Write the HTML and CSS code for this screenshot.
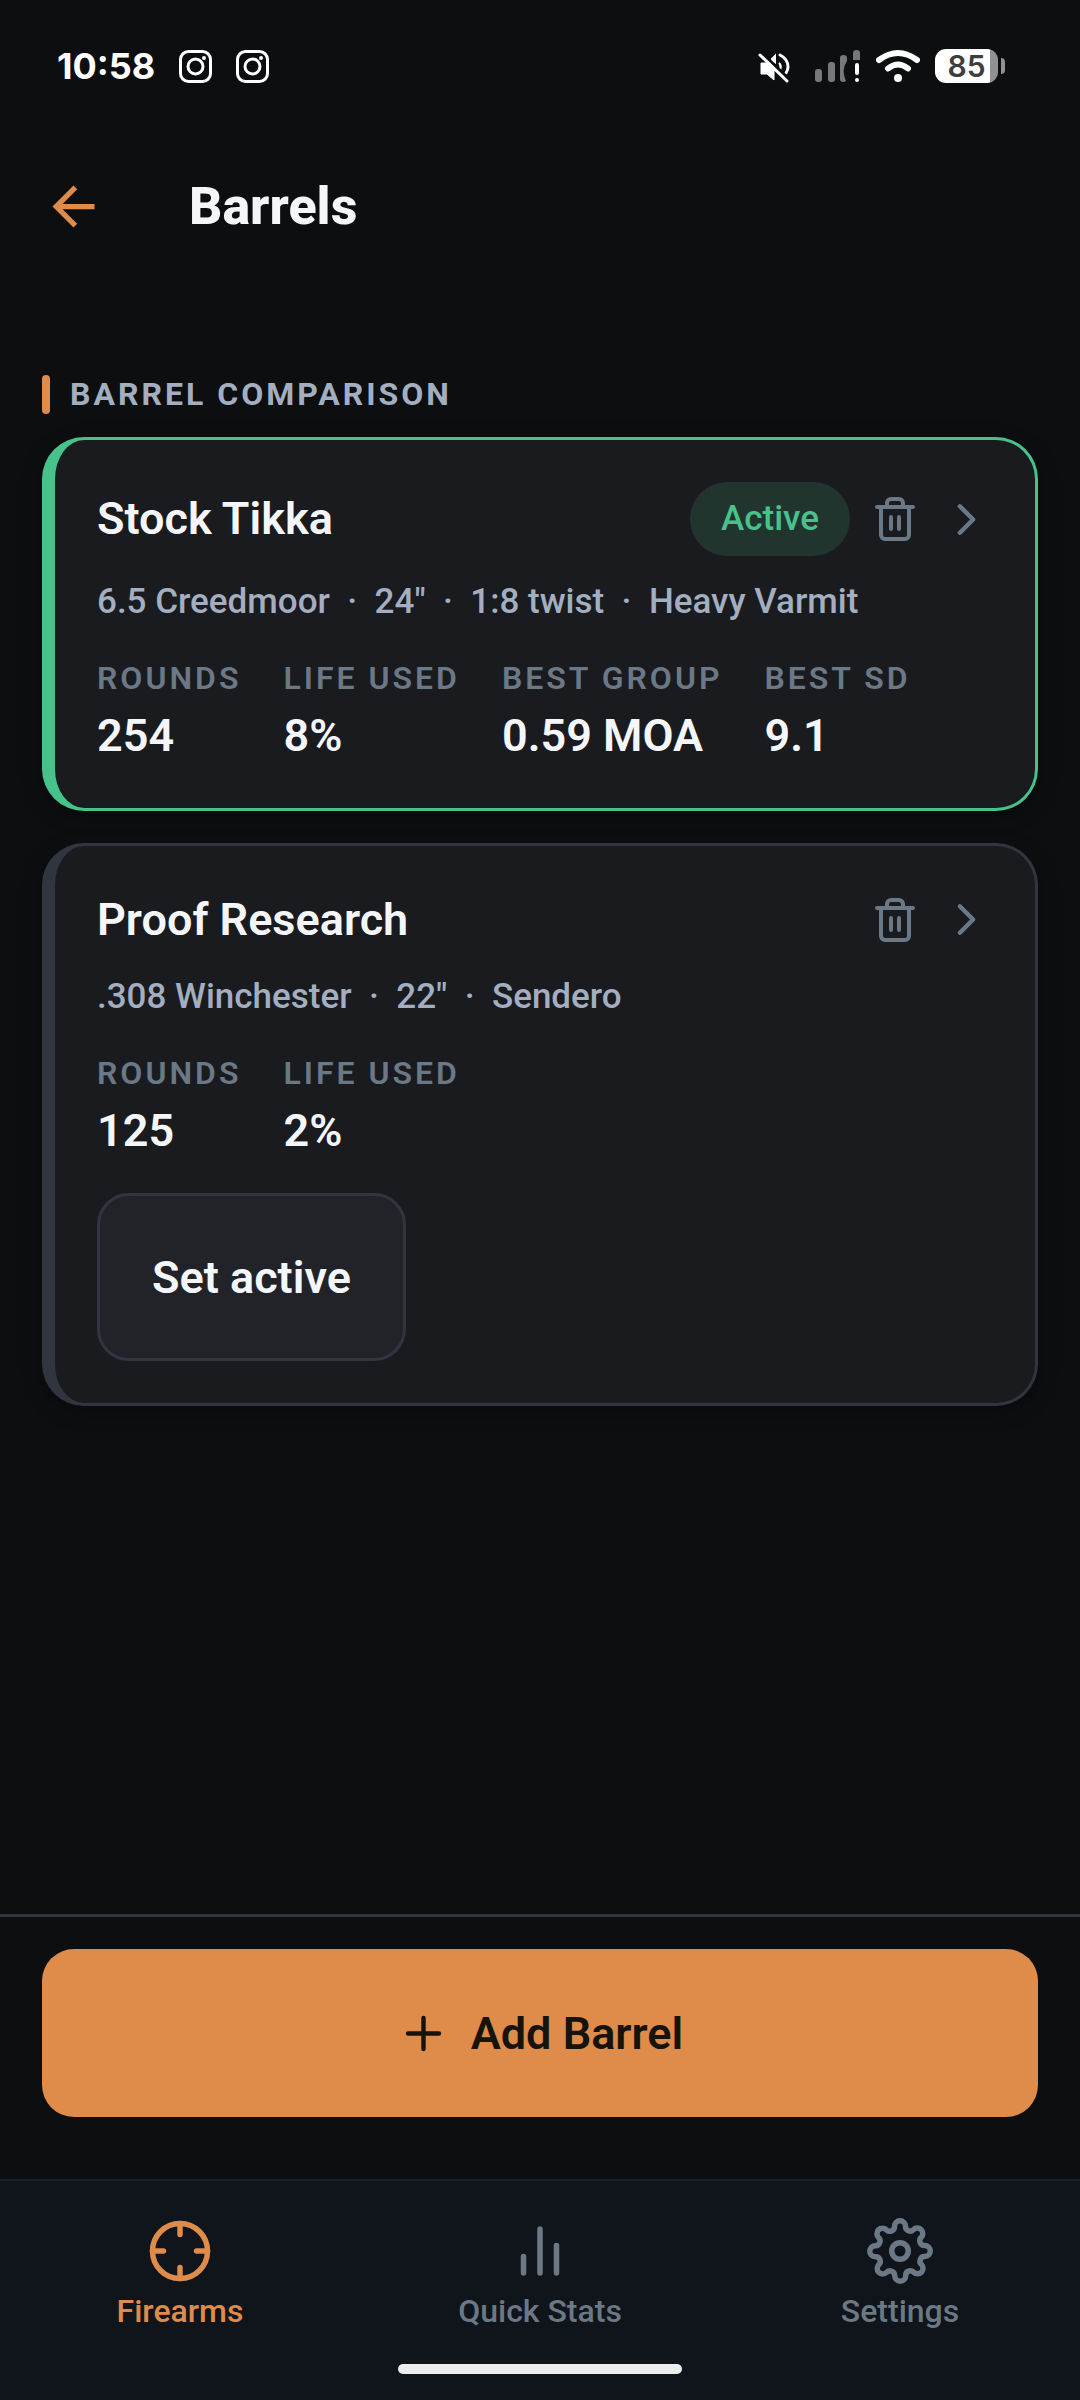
FILE: index.html
```html
<!DOCTYPE html>
<html lang="en">
<head>
  <meta charset="UTF-8">
  <meta name="viewport" content="width=device-width, initial-scale=1.0">
  <title>Barrels</title>
  <link rel="stylesheet" href="styles.css">
</head>
<body>
  <!-- shared icons -->
  <svg class="sprite" aria-hidden="true">
    <symbol id="icon-camera" viewBox="0 0 33 33">
      <rect x="1.5" y="1.5" width="30" height="30" rx="8" fill="none" stroke="currentColor" stroke-width="3"/>
      <circle cx="16.5" cy="16.5" r="7.5" fill="none" stroke="currentColor" stroke-width="3"/>
      <circle cx="25" cy="8" r="2" fill="currentColor"/>
    </symbol>
    <symbol id="icon-trash" viewBox="0 0 24 24">
      <path d="M3 6h18"/>
      <path d="M19 6v14a2 2 0 0 1-2 2H7a2 2 0 0 1-2-2V6m3 0V4a2 2 0 0 1 2-2h4a2 2 0 0 1 2 2v2"/>
      <path d="M10 11v6M14 11v6"/>
    </symbol>
    <symbol id="icon-chevron" viewBox="0 0 24 24">
      <path d="M9 18l6-6-6-6"/>
    </symbol>
  </svg>

  <div class="status-bar">
    <div class="status-left">
      <span class="clock">10:58</span>
      <svg class="notification"><use href="#icon-camera"/></svg>
      <svg class="notification"><use href="#icon-camera"/></svg>
    </div>
    <div class="status-right">
      <svg class="mute" viewBox="0 0 34 34">
        <path d="M3 14h6l7-5v22l-7-6H3z" fill="#fff" stroke="#fff" stroke-linejoin="round"/>
        <path d="M14 10l3-3v6zM21 14q3 3 1 7" fill="#fff" stroke="#fff" stroke-width="2"/>
        <path d="M22 6q8 4 8 12q0 3-2 6" fill="none" stroke="#fff" stroke-width="3" stroke-linecap="round"/>
        <path d="M4 4l28 27" stroke="#0c0e10" stroke-width="3"/>
        <path d="M2 6l27 26" stroke="#fff" stroke-width="3" stroke-linecap="round"/>
      </svg>
      <svg class="signal" viewBox="0 0 46 34">
        <rect x="0" y="20" width="7" height="13" rx="3" fill="#777879"/>
        <rect x="13" y="13" width="7" height="20" rx="3" fill="#777879"/>
        <path d="M25 9q0-3 3.500-3t3.500 3v3q-6 9-1 20q-1 1-3 1q-3 0-3-3z" fill="#777879"/>
        <path d="M38 11V4q0-3 3.500-3t3.500 3v7z" fill="#777879"/>
        <rect x="40" y="14" width="4" height="12" rx="2" fill="#fff"/>
        <circle cx="42" cy="31" r="2" fill="#fff"/>
      </svg>
      <svg class="wifi" viewBox="0 0 44 34">
        <path d="M3 11q19-14 38 0" fill="none" stroke="#fff" stroke-width="6" stroke-linecap="round"/>
        <path d="M12 19.500q10-8 20 0" fill="none" stroke="#fff" stroke-width="6" stroke-linecap="round"/>
        <circle cx="22" cy="29" r="4" fill="#fff"/>
      </svg>
      <div class="battery">
        <span class="battery-level">85</span>
        <span class="battery-tip"></span>
      </div>
    </div>
  </div>

  <header class="app-header">
    <a class="back" href="#" aria-label="Back">
      <svg viewBox="0 0 24 24"><path d="M20 11H7.830l5.590-5.590L12 4l-8 8 8 8 1.410-1.410L7.830 13H20z"/></svg>
    </a>
    <h1>Barrels</h1>
  </header>

  <main class="content">
    <h2 class="section-title">BARREL COMPARISON</h2>

    <article class="card card-active">
      <div class="card-head">
        <h3>Stock Tikka</h3>
        <span class="badge">Active</span>
        <button class="icon-button" type="button" aria-label="Delete Stock Tikka">
          <svg class="icon icon-trash"><use href="#icon-trash"/></svg>
        </button>
        <a class="icon-button" href="#" aria-label="Open Stock Tikka">
          <svg class="icon icon-chevron"><use href="#icon-chevron"/></svg>
        </a>
      </div>
      <p class="specs">6.5 Creedmoor &nbsp;·&nbsp; 24" &nbsp;·&nbsp; 1:8 twist &nbsp;·&nbsp; Heavy Varmit</p>
      <dl class="stats">
        <div><dt>ROUNDS</dt><dd>254</dd></div>
        <div><dt>LIFE USED</dt><dd>8%</dd></div>
        <div><dt>BEST GROUP</dt><dd>0.59 MOA</dd></div>
        <div><dt>BEST SD</dt><dd>9.1</dd></div>
      </dl>
    </article>

    <article class="card">
      <div class="card-head">
        <h3>Proof Research</h3>
        <button class="icon-button" type="button" aria-label="Delete Proof Research">
          <svg class="icon icon-trash"><use href="#icon-trash"/></svg>
        </button>
        <a class="icon-button" href="#" aria-label="Open Proof Research">
          <svg class="icon icon-chevron"><use href="#icon-chevron"/></svg>
        </a>
      </div>
      <p class="specs">.308 Winchester &nbsp;·&nbsp; 22" &nbsp;·&nbsp; Sendero</p>
      <dl class="stats">
        <div><dt>ROUNDS</dt><dd>125</dd></div>
        <div><dt>LIFE USED</dt><dd>2%</dd></div>
      </dl>
      <button class="button button-secondary" type="button">Set active</button>
    </article>
  </main>

  <div class="actions">
    <button class="button button-primary" type="button">
      <svg class="icon icon-plus" viewBox="0 0 24 24"><path d="M12 5v14M5 12h14"/></svg>
      Add Barrel
    </button>
  </div>

  <footer class="tab-bar">
    <nav class="tabs">
      <a class="tab tab-current" href="#">
        <svg class="icon" viewBox="0 0 24 24">
          <circle cx="12" cy="12" r="10"/>
          <path d="M22 12h-4M6 12H2M12 6V2M12 22v-4"/>
        </svg>
        Firearms
      </a>
      <a class="tab" href="#">
        <svg class="icon" viewBox="0 0 24 24"><path d="M18 20V10M12 20V4M6 20v-6"/></svg>
        Quick Stats
      </a>
      <a class="tab" href="#">
        <svg class="icon" viewBox="0 0 24 24">
          <circle cx="12" cy="12" r="3"/>
          <path d="M19.400 15a1.650 1.650 0 0 0 .33 1.820l.06.06a2 2 0 0 1 0 2.830 2 2 0 0 1-2.830 0l-.06-.06a1.650 1.650 0 0 0-1.820-.33 1.650 1.650 0 0 0-1 1.510V21a2 2 0 0 1-2 2 2 2 0 0 1-2-2v-.09A1.650 1.650 0 0 0 9 19.400a1.650 1.650 0 0 0-1.820.33l-.06.06a2 2 0 0 1-2.830 0 2 2 0 0 1 0-2.830l.06-.06a1.650 1.650 0 0 0 .33-1.820 1.650 1.650 0 0 0-1.510-1H3a2 2 0 0 1-2-2 2 2 0 0 1 2-2h.09A1.650 1.650 0 0 0 4.600 9a1.650 1.650 0 0 0-.33-1.820l-.06-.06a2 2 0 0 1 0-2.830 2 2 0 0 1 2.830 0l.06.06a1.650 1.650 0 0 0 1.820.33H9a1.650 1.650 0 0 0 1-1.510V3a2 2 0 0 1 2-2 2 2 0 0 1 2 2v.09a1.650 1.650 0 0 0 1 1.510 1.650 1.650 0 0 0 1.820-.33l.06-.06a2 2 0 0 1 2.830 0 2 2 0 0 1 0 2.830l-.06.06a1.650 1.650 0 0 0-.33 1.820V9a1.650 1.650 0 0 0 1.510 1H21a2 2 0 0 1 2 2 2 2 0 0 1-2 2h-.09a1.650 1.650 0 0 0-1.510 1z"/>
        </svg>
        Settings
      </a>
    </nav>
    <div class="home-indicator"></div>
  </footer>
</body>
</html>
```
FILE: styles.css
```css
* {
  box-sizing: border-box;
}

body {
  display: flex;
  flex-direction: column;
  min-height: 100vh;
  margin: 0;
  background: #0c0e10;
  color: #f4f6fa;
  font-family: Roboto, sans-serif;
}

h1, h2, h3, p, dl, dd {
  margin: 0;
}

a {
  color: inherit;
  text-decoration: none;
}

button {
  font-family: inherit;
  cursor: pointer;
}

.sprite {
  display: none;
}

.icon {
  display: block;
  fill: none;
  stroke: currentColor;
  stroke-width: 2;
  stroke-linecap: round;
  stroke-linejoin: round;
}

/* status bar */

.status-bar {
  display: flex;
  justify-content: space-between;
  align-items: center;
  height: 132px;
  padding: 0 75px 0 57px;
  color: #fff;
}

.status-left,
.status-right {
  display: flex;
  align-items: center;
}

.status-left {
  gap: 24px;
}

.clock {
  font: 700 36px/40px Inter, sans-serif;
}

.notification {
  width: 33px;
  height: 33px;
}

.status-right {
  gap: 15px;
}

.mute {
  width: 34px;
  height: 34px;
}

.signal {
  width: 46px;
  height: 34px;
  margin-left: 8px;
}

.wifi {
  width: 44px;
  height: 34px;
}

.battery {
  display: flex;
  align-items: center;
  gap: 3px;
}

.battery-level {
  width: 63px;
  border-radius: 11px;
  background: linear-gradient(to right, #fff 87%, #919193 87%);
  color: #3e3e40;
  font: 600 30px/34px Inter, sans-serif;
  text-align: center;
}

.battery-tip {
  width: 4px;
  height: 16px;
  border-radius: 0 4px 4px 0;
  background: #919193;
}

/* header */

.app-header {
  display: flex;
  align-items: center;
  gap: 84px;
  height: 149px;
  padding: 0 42px;
}

.back svg {
  display: block;
  width: 63px;
  height: 63px;
  fill: #df8b49;
}

.app-header h1 {
  font-size: 52px;
  font-weight: 800;
  line-height: 64px;
}

/* barrel list */

.content {
  display: flex;
  flex: 1;
  flex-direction: column;
  padding: 94px 42px 42px;
}

.section-title {
  display: flex;
  align-items: center;
  gap: 20px;
  margin-bottom: 23px;
  color: #a3afc0;
  font-size: 32px;
  font-weight: 700;
  line-height: 39px;
  letter-spacing: 3px;
}

.section-title::before {
  content: "";
  width: 8px;
  height: 39px;
  border-radius: 4px;
  background: #df8b49;
}

.card {
  margin-bottom: 32px;
  padding: 42px;
  border: 3px solid #313540;
  border-left-width: 13px;
  border-radius: 42px;
  background: #1a1b1f;
  box-shadow: 0 5px 20px rgba(0, 0, 0, 0.3);
}

.card-active {
  border-color: #47c28b;
}

.card-head {
  display: flex;
  align-items: center;
  gap: 21px;
  min-height: 63px;
}

.card-head h3 {
  flex: 1;
  font-size: 45px;
  font-weight: 600;
  line-height: 60px;
}

.badge {
  padding: 0 31px;
  border-radius: 37px;
  background: #21342d;
  color: #47c28b;
  font-size: 35px;
  font-weight: 500;
  line-height: 74px;
}

.icon-button {
  padding: 0;
  border: 0;
  background: none;
  color: #6b7886;
}

.icon-trash {
  width: 48px;
  height: 48px;
}

.icon-chevron {
  width: 53px;
  height: 53px;
}

.specs {
  margin-top: 22px;
  color: #a3afc0;
  font-size: 35px;
  font-weight: 500;
  line-height: 48px;
}

.stats {
  display: flex;
  flex-wrap: wrap;
  gap: 42px;
  margin-top: 31px;
}

.stats dt {
  color: #6b7886;
  font-size: 32px;
  font-weight: 600;
  line-height: 42px;
  letter-spacing: 3px;
}

.stats dd {
  margin-top: 7px;
  font-size: 45px;
  font-weight: 600;
  line-height: 60px;
}

/* buttons */

.button {
  display: flex;
  justify-content: center;
  align-items: center;
  height: 168px;
  border-radius: 32px;
  font-size: 45px;
  font-weight: 600;
}

.button-secondary {
  margin-top: 32px;
  padding: 0 52px;
  border: 3px solid #313540;
  background: #222328;
  color: #f4f6fa;
}

.button-primary {
  gap: 21px;
  width: 100%;
  border: 0;
  background: #df8b49;
  color: #16130d;
}

.icon-plus {
  width: 53px;
  height: 53px;
}

.actions {
  padding: 32px 42px 62px;
  border-top: 3px solid #313540;
}

/* bottom tabs */

.tab-bar {
  padding: 37px 0 26px;
  border-top: 2px solid #1a2028;
  background: #10141b;
}

.tabs {
  display: grid;
  grid-template-columns: repeat(3, 1fr);
}

.tab {
  display: flex;
  flex-direction: column;
  align-items: center;
  gap: 9px;
  color: #6b7886;
  font-size: 32px;
  font-weight: 500;
  line-height: 36px;
}

.tab-current {
  color: #df8b49;
}

.tab .icon {
  width: 66px;
  height: 66px;
}

.home-indicator {
  width: 284px;
  height: 10px;
  margin: 35px auto 0;
  border-radius: 5px;
  background: #eceeee;
}
```
